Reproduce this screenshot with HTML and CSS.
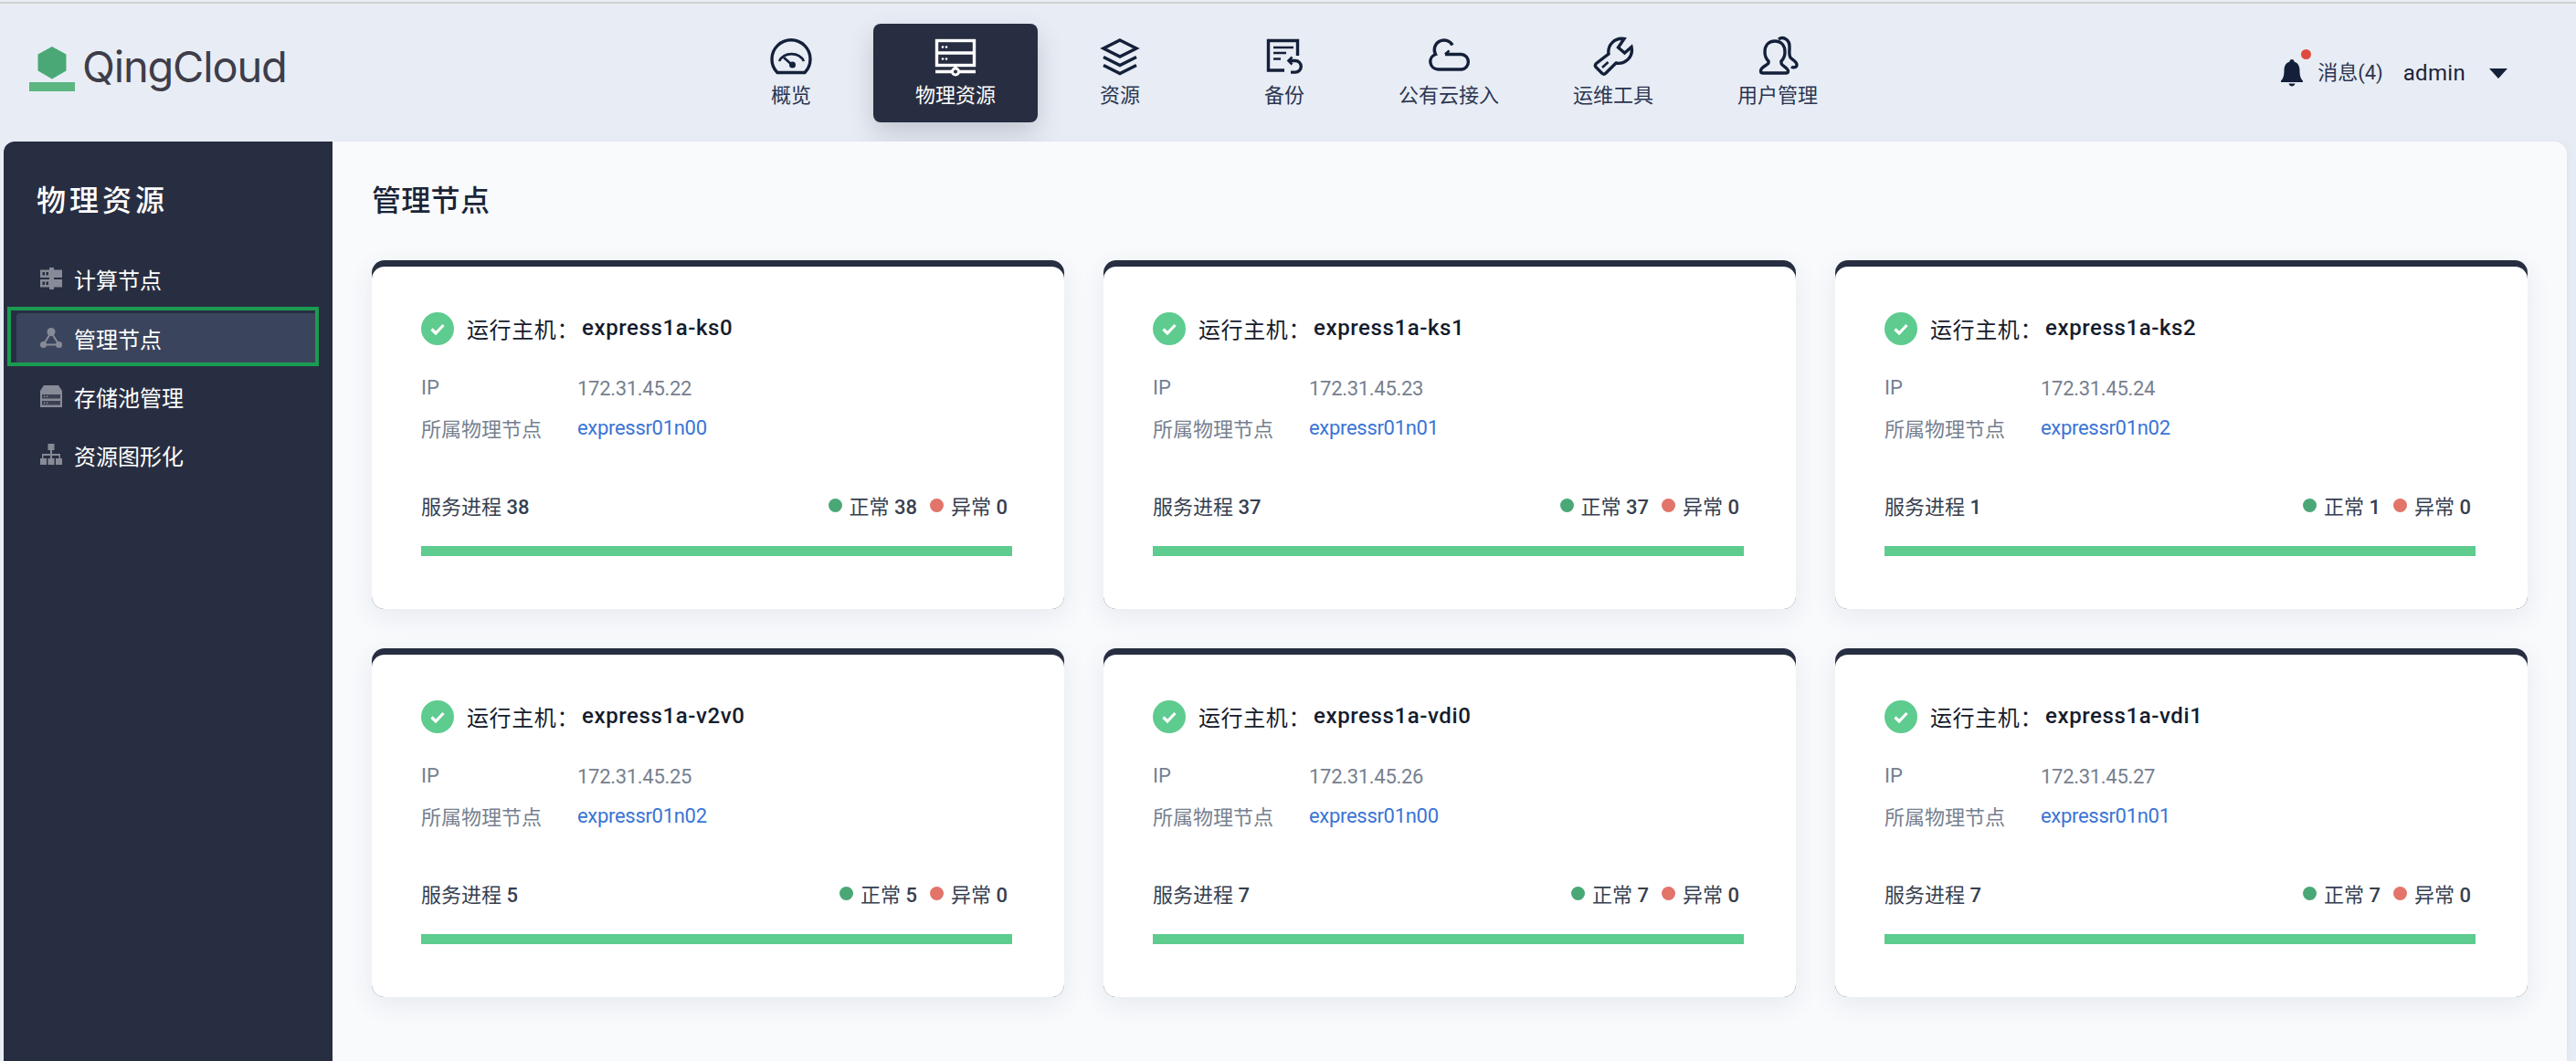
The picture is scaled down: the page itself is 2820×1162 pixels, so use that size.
FILE: index.html
```html
<!DOCTYPE html>
<html lang="zh-CN">
<head>
  <meta charset="UTF-8">
  <title>QingCloud 物理资源</title>
  <link rel="stylesheet" href="styles.css">
</head>
<body>

<svg class="sprites" width="0" height="0">
  <symbol id="check" viewBox="0 0 36 36">
    <circle cx="18" cy="18" r="18" fill="#5ecb8f"/>
    <path d="M11.5 18.5l4.5 4.5 8.5-9" fill="none" stroke="#fff" stroke-width="3.2"/>
  </symbol>
</svg>

<!-- Top bar -->
<header class="topbar">
  <div class="logo">
    <svg class="logo-mark" viewBox="0 0 50 50" width="50" height="50">
      <path d="M25 0l15.5 8.5v18L25 35.500 9.500 26.500v-18z" fill="#4aa877"/>
      <rect x="0" y="39" width="50" height="10" fill="#5cb682"/>
    </svg>
    <span class="logo-text">QingCloud</span>
  </div>

  <nav class="mainnav">
    <a class="mainnav-item">
      <svg class="nav-icon" viewBox="0 0 48 48">
        <path d="M9 41.500A21 21 0 1 1 39 41.500Z"/>
        <path class="thin" d="M11 29A15 14 0 0 1 38 29"/>
        <path class="thin" d="M16 25l9 8"/>
        <circle class="solid" cx="25.500" cy="33" r="3.500"/>
      </svg>
      <span>概览</span>
    </a>
    <a class="mainnav-item active">
      <svg class="nav-icon" viewBox="0 0 48 48">
        <rect x="3.500" y="6.500" width="41" height="27"/>
        <path d="M3.500 20h41M24 34v6M2 40.500h44"/>
        <circle class="dots" cx="10" cy="13.500" r="1.300"/>
        <circle class="dots" cx="14" cy="13.500" r="1.300"/>
        <circle class="dots" cx="10" cy="26.500" r="1.300"/>
        <circle class="dots" cx="14" cy="26.500" r="1.300"/>
        <circle class="ring" cx="24" cy="40.500" r="3.500"/>
      </svg>
      <span>物理资源</span>
    </a>
    <a class="mainnav-item">
      <svg class="nav-icon" viewBox="0 0 48 48">
        <path d="M24 6l18 9-18 9-18-9z"/>
        <path d="M6 24.500l18 9 18-9M6 33.500l18 9 18-9"/>
      </svg>
      <span>资源</span>
    </a>
    <a class="mainnav-item">
      <svg class="nav-icon" viewBox="0 0 48 48">
        <path d="M38.500 23V6.500h-32V39H24"/>
        <path class="thin" d="M12 14h22M12 20h14M12 26.500h8"/>
        <path d="M29 28.500h7a6.300 6.300 0 0 1 0 12.600h-5"/>
        <path class="thin" d="M32.500 24.500l-4 4 4 4"/>
      </svg>
      <span>备份</span>
    </a>
    <a class="mainnav-item">
      <svg class="nav-icon" viewBox="0 0 48 48">
        <path d="M12 38A8.500 8.500 0 0 1 9.500 21.500 10.500 10.500 0 0 1 28 11.500"/>
        <path d="M20 21.500h18a8.300 8.300 0 0 1 0 16.500H12"/>
        <path class="thin" d="M20 21.500l4.500-4"/>
      </svg>
      <span>公有云接入</span>
    </a>
    <a class="mainnav-item">
      <svg class="nav-icon" viewBox="0 0 48 48">
        <path d="M36 4.500A14.500 14.500 0 0 0 19 21L5.500 31.500q-2 2-.5 4l7 7q2 1.500 4-.5L27 31A14.500 14.500 0 0 0 44 13.500l-7.500 6.500-7-6z"/>
        <path class="thin" d="M12 36l6.500-6"/>
      </svg>
      <span>运维工具</span>
    </a>
    <a class="mainnav-item">
      <svg class="nav-icon" viewBox="0 0 48 48">
        <path d="M21 7c-7 0-11 5-11 12 0 5 2 8 4 10v2c0 2-9 4-8.500 9 0 1.300 1 2 2.500 2h25c1.500 0 2.500-.7 2.500-2 0-4-7.500-6-7.500-9v-2c2-2 4-5 4-10 0-7-4-12-11-12z"/>
        <path d="M25 5c2-1.500 5-2 7.500-.5 4 2 5 6 4.500 11-.3 4-.5 7 1 9.500 1.500 2 7 4 7 8 0 3-4 3.500-6 2"/>
      </svg>
      <span>用户管理</span>
    </a>
  </nav>

  <div class="userbar">
    <span class="bell">
      <svg viewBox="0 0 24 30" width="24" height="30">
        <path d="M12 0c1.500 0 2.500 1 2.500 2.500C19 4 20.500 8 20.500 12c0 6 1 9 3.500 11.500V25H0v-1.500C2.500 21 3.500 18 3.500 12c0-4 1.500-8 6-9.500C9.500 1 10.500 0 12 0z" fill="#14203a"/>
        <path d="M8.500 26.500h7c-.5 2-2 3-3.500 3s-3-1-3.500-3z" fill="#14203a"/>
      </svg>
      <i class="bell-dot"></i>
    </span>
    <span class="msg">消息(4)</span>
    <span class="username">admin</span>
    <i class="caret"></i>
  </div>
</header>

<div class="layout">
  <!-- Sidebar -->
  <aside class="sidebar">
    <h2 class="sidebar-title">物理资源</h2>
    <ul class="sidemenu">
      <li class="sidemenu-item">
        <svg class="side-icon" viewBox="0 0 24 24">
          <path d="M10 0h5v2.500h9v8.500h-9v2h9v8.500h-9V24h-5v-2.500H0V13h10v-2H0V2.500h10z"/>
          <path class="hole" d="M2.500 5h2.500v3.500H2.500zM6.500 5h2.500v3.500H6.500zM2.500 15.500h2.500V19H2.500zM6.500 15.500h2.500V19H6.500z"/>
        </svg>
        <span>计算节点</span>
      </li>
      <li class="focus-frame">
        <div class="sidemenu-item selected">
          <svg class="side-icon" viewBox="0 0 24 24">
            <circle cx="12" cy="5.500" r="4.500"/>
            <circle cx="3.500" cy="19.500" r="3.500"/>
            <circle cx="20.500" cy="19.500" r="3.500"/>
            <path class="line" d="M12 6L3.500 19.500h17z"/>
          </svg>
          <span>管理节点</span>
        </div>
      </li>
      <li class="sidemenu-item">
        <svg class="side-icon" viewBox="0 0 24 24">
          <path d="M4 0h16l4 6v18H0V6z"/>
          <path class="hole" d="M2 10h20v4.500H2zM2 17h20v4.500H2z" fill-opacity=".8"/>
          <path d="M4 11.500h1.500V13H4zM7 11.500h1.500V13H7zM4 18.500h1.500V20H4zM7 18.500h1.500V20H7z"/>
        </svg>
        <span>存储池管理</span>
      </li>
      <li class="sidemenu-item">
        <svg class="side-icon" viewBox="0 0 24 24">
          <path d="M8.500 0h7v7h-2.500v4h9v5h2v7h-7v-7h3.500v-3H13v3h2.500v7h-7v-7H11v-3H3.500v3H7v7H0v-7h2v-5h9V7H8.500z"/>
        </svg>
        <span>资源图形化</span>
      </li>
    </ul>
  </aside>

  <!-- Main content -->
  <main class="content">
    <h1 class="page-title">管理节点</h1>
    <div class="card-grid">

      <section class="card">
        <div class="card-body">
          <div class="card-title"><svg class="status-icon"><use href="#check"/></svg><span>运行主机：</span><b>express1a-ks0</b></div>
          <div class="info-row"><span class="info-label">IP</span><span class="info-value">172.31.45.22</span></div>
          <div class="info-row"><span class="info-label">所属物理节点</span><a class="info-link">expressr01n00</a></div>
          <div class="service-row">
            <span>服务进程 <b>38</b></span>
            <span class="legend"><i class="dot ok"></i><span>正常 <b>38</b></span><i class="dot bad"></i><span>异常 <b>0</b></span></span>
          </div>
          <div class="bar"></div>
        </div>
      </section>

      <section class="card">
        <div class="card-body">
          <div class="card-title"><svg class="status-icon"><use href="#check"/></svg><span>运行主机：</span><b>express1a-ks1</b></div>
          <div class="info-row"><span class="info-label">IP</span><span class="info-value">172.31.45.23</span></div>
          <div class="info-row"><span class="info-label">所属物理节点</span><a class="info-link">expressr01n01</a></div>
          <div class="service-row">
            <span>服务进程 <b>37</b></span>
            <span class="legend"><i class="dot ok"></i><span>正常 <b>37</b></span><i class="dot bad"></i><span>异常 <b>0</b></span></span>
          </div>
          <div class="bar"></div>
        </div>
      </section>

      <section class="card">
        <div class="card-body">
          <div class="card-title"><svg class="status-icon"><use href="#check"/></svg><span>运行主机：</span><b>express1a-ks2</b></div>
          <div class="info-row"><span class="info-label">IP</span><span class="info-value">172.31.45.24</span></div>
          <div class="info-row"><span class="info-label">所属物理节点</span><a class="info-link">expressr01n02</a></div>
          <div class="service-row">
            <span>服务进程 <b>1</b></span>
            <span class="legend"><i class="dot ok"></i><span>正常 <b>1</b></span><i class="dot bad"></i><span>异常 <b>0</b></span></span>
          </div>
          <div class="bar"></div>
        </div>
      </section>

      <section class="card">
        <div class="card-body">
          <div class="card-title"><svg class="status-icon"><use href="#check"/></svg><span>运行主机：</span><b>express1a-v2v0</b></div>
          <div class="info-row"><span class="info-label">IP</span><span class="info-value">172.31.45.25</span></div>
          <div class="info-row"><span class="info-label">所属物理节点</span><a class="info-link">expressr01n02</a></div>
          <div class="service-row">
            <span>服务进程 <b>5</b></span>
            <span class="legend"><i class="dot ok"></i><span>正常 <b>5</b></span><i class="dot bad"></i><span>异常 <b>0</b></span></span>
          </div>
          <div class="bar"></div>
        </div>
      </section>

      <section class="card">
        <div class="card-body">
          <div class="card-title"><svg class="status-icon"><use href="#check"/></svg><span>运行主机：</span><b>express1a-vdi0</b></div>
          <div class="info-row"><span class="info-label">IP</span><span class="info-value">172.31.45.26</span></div>
          <div class="info-row"><span class="info-label">所属物理节点</span><a class="info-link">expressr01n00</a></div>
          <div class="service-row">
            <span>服务进程 <b>7</b></span>
            <span class="legend"><i class="dot ok"></i><span>正常 <b>7</b></span><i class="dot bad"></i><span>异常 <b>0</b></span></span>
          </div>
          <div class="bar"></div>
        </div>
      </section>

      <section class="card">
        <div class="card-body">
          <div class="card-title"><svg class="status-icon"><use href="#check"/></svg><span>运行主机：</span><b>express1a-vdi1</b></div>
          <div class="info-row"><span class="info-label">IP</span><span class="info-value">172.31.45.27</span></div>
          <div class="info-row"><span class="info-label">所属物理节点</span><a class="info-link">expressr01n01</a></div>
          <div class="service-row">
            <span>服务进程 <b>7</b></span>
            <span class="legend"><i class="dot ok"></i><span>正常 <b>7</b></span><i class="dot bad"></i><span>异常 <b>0</b></span></span>
          </div>
          <div class="bar"></div>
        </div>
      </section>

    </div>
  </main>
</div>

</body>
</html>
```

FILE: styles.css
```css
/* Global styles */
html, body {
  height: 100%;
}

body {
  margin: 0;
  overflow: hidden;
  background: #e8edf5;
  color: #1c2438;
  font-family: Roboto, 'Noto Sans CJK SC', sans-serif;
  display: flex;
  flex-direction: column;
}

.sprites {
  position: absolute;
}

/* Top bar */
.topbar {
  flex: none;
  box-sizing: border-box;
  height: 153px;
  margin-top: 2px;
  border-top: 2px solid #cfd1d0;
  display: flex;
  align-items: flex-start;
  justify-content: space-between;
}

.logo {
  width: 776px;
  box-sizing: border-box;
  padding: 44px 0 0 32px;
  display: flex;
  align-items: flex-start;
  gap: 8px;
}

.logo-mark {
  display: block;
  margin-top: 3px;
}

.logo-text {
  font-family: Inter, sans-serif;
  font-size: 47px;
  line-height: 50px;
  letter-spacing: -1.2px;
  color: #3f3d4a;
}

.mainnav {
  display: flex;
  margin-top: 22px;
  flex: 1;
}

.mainnav-item {
  width: 180px;
  height: 108px;
  box-sizing: border-box;
  padding-top: 12px;
  border-radius: 8px;
  display: flex;
  flex-direction: column;
  align-items: center;
  font-size: 22px;
  line-height: 30px;
  color: #2b3550;
}

.mainnav-item span {
  margin-top: 4px;
}

.mainnav-item.active {
  background: #282e41;
  color: #fff;
  box-shadow: 0 12px 28px rgba(40, 46, 65, 0.2);
}

.nav-icon {
  display: block;
  width: 48px;
  height: 48px;
  fill: none;
  stroke: #14203a;
  stroke-width: 3.4;
}

.nav-icon .thin {
  stroke-width: 2.6;
}

.nav-icon .solid {
  fill: #14203a;
  stroke: none;
}

.active .nav-icon {
  stroke: #fff;
}

.active .nav-icon .dots {
  fill: #fff;
  stroke: none;
}

.active .nav-icon .ring {
  fill: #282e41;
  stroke-width: 3;
}

.userbar {
  display: flex;
  align-items: center;
  padding: 59px 75px 0 0;
  font-size: 22px;
  line-height: 34px;
  color: #2b3550;
}

.bell {
  position: relative;
  height: 30px;
  margin-right: 16px;
}

.bell svg {
  display: block;
}

.bell-dot {
  position: absolute;
  top: -11px;
  right: -9px;
  width: 11px;
  height: 11px;
  border-radius: 50%;
  background: #e0493d;
}

.username {
  margin-left: 22px;
  font-size: 24px;
  letter-spacing: 0.3px;
  color: #1c2438;
}

.caret {
  margin-left: 26px;
  border-style: solid;
  border-width: 11px 10.500px 0;
  border-color: #14203a transparent transparent;
}

/* Page layout */
.layout {
  flex: 1;
  min-height: 0;
  display: flex;
  margin: 0 10px 0 4px;
}

.sidebar {
  flex: none;
  width: 360px;
  background: #282e41;
  border-top-left-radius: 12px;
  color: #fff;
}

.sidebar-title {
  margin: 45px 0 0 36px;
  font-size: 32px;
  line-height: 40px;
  font-weight: 500;
  letter-spacing: 4px;
}

.sidemenu {
  list-style: none;
  margin: 38px 0 0;
  padding: 0;
  display: flex;
  flex-direction: column;
  gap: 10px;
}

.sidemenu-item {
  height: 54px;
  box-sizing: border-box;
  margin: 0 19px 0 14px;
  padding-left: 26px;
  display: flex;
  align-items: center;
  gap: 13px;
  font-size: 24px;
  color: #fff;
}

.focus-frame {
  margin: -6px 15px -4px 4px;
  padding: 3px 0 0 6px;
  border: 4px solid #1a9c50;
}

.sidemenu-item.selected {
  margin: 0;
  background: #3a445c;
  border-radius: 4px 0 0 0;
}

.side-icon {
  flex: none;
  width: 24px;
  height: 24px;
  fill: #878b97;
}

.side-icon .hole {
  fill: #282e41;
}

.side-icon .line {
  fill: none;
  stroke: #878b97;
  stroke-width: 2;
}

.content {
  flex: 1;
  min-width: 0;
  box-sizing: border-box;
  padding: 45px 43px 0;
  background: #f8fafc;
  border-top-right-radius: 14px;
  box-shadow: 2px 0 10px rgba(60, 80, 120, 0.05);
}

.page-title {
  margin: 0 0 45px;
  font-size: 32px;
  line-height: 40px;
  font-weight: 500;
  letter-spacing: 0.3px;
  color: #1c2438;
}

.card-grid {
  display: grid;
  grid-template-columns: repeat(3, 758px);
  gap: 43px;
}

/* Node cards */
.card {
  height: 382px;
  box-sizing: border-box;
  padding-top: 7px;
  background: #282e41;
  border-radius: 14px;
  box-shadow: 0 8px 28px rgba(50, 70, 110, 0.09);
}

.card-body {
  height: 375px;
  box-sizing: border-box;
  padding: 50px 57px 0 54px;
  background: #fff;
  border-radius: 14px;
}

.card-title {
  display: flex;
  align-items: center;
  height: 36px;
  margin-bottom: 26px;
  font-size: 24px;
  letter-spacing: 0.6px;
  color: #161c2c;
}

.card-title span,
.card-title b {
  padding-bottom: 2px;
}

.card-title b {
  margin-left: 3px;
  font-weight: 500;
}

.status-icon {
  flex: none;
  width: 36px;
  height: 36px;
  margin-right: 14px;
}

.info-row {
  display: flex;
  height: 43px;
  align-items: center;
  font-size: 22px;
  color: #76808f;
}

.info-label {
  width: 171px;
  padding-bottom: 2px;
}

.info-value,
.info-link {
  letter-spacing: -0.3px;
}

.info-link {
  color: #3a74d6;
}

.service-row {
  display: flex;
  align-items: center;
  justify-content: space-between;
  height: 36px;
  margin-top: 45px;
  padding-right: 5px;
  font-size: 22px;
  color: #363f50;
}

.service-row b {
  font-weight: 500;
}

.legend {
  display: flex;
  align-items: center;
}

.dot {
  width: 15px;
  height: 15px;
  margin-right: 8px;
  border-radius: 50%;
}

.dot.ok {
  background: #4aa877;
}

.dot.bad {
  margin-left: 14px;
  background: #e2746a;
}

.bar {
  height: 11px;
  margin-top: 27px;
  background: #5ecb8f;
}
```
